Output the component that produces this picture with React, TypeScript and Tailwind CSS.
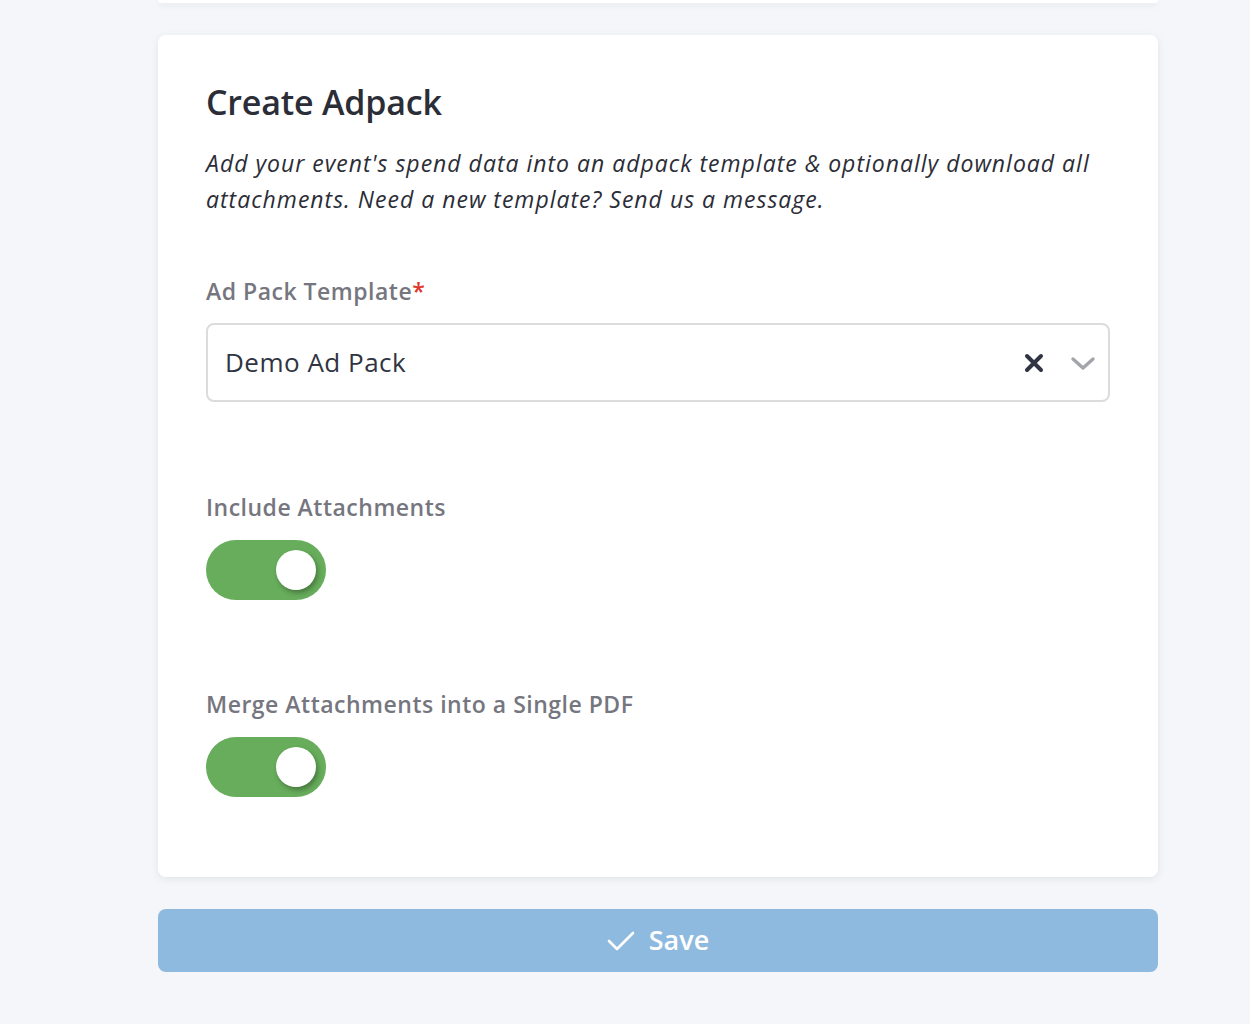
import React, { useState } from 'react';

const font = { fontFamily: '"Open Sans", Lato, sans-serif' };

const Toggle: React.FC<{ on: boolean; onChange: () => void }> = ({ on, onChange }) => (
  <button
    type="button"
    onClick={onChange}
    className={`flex h-[60px] w-[120px] items-center rounded-full px-[10px] ${on ? 'justify-end bg-[#67ad5b]' : 'justify-start bg-[#d5d7dd]'}`}
  >
    <span className="block h-[40px] w-[40px] rounded-full bg-white shadow-[2px_3px_5px_rgba(0,0,0,0.3)]" />
  </button>
);

export default function App() {
  const [include, setInclude] = useState(true);
  const [merge, setMerge] = useState(true);

  return (
    <div className="min-h-screen bg-[#f4f6fa]" style={font}>
      <div className="ml-[158px] w-[1000px] pb-[52px]">
        {/* previous card, scrolled off */}
        <div className="h-[3px] rounded-b-lg bg-white shadow-[0_2px_6px_rgba(0,0,0,0.08)]" />

        <div className="mt-[32px] rounded-lg bg-white px-[48px] pb-[80px] pt-[47px] shadow-[0_2px_8px_rgba(0,0,0,0.08)]">
          <h2 className="text-[34px] font-semibold leading-[40px] tracking-[-0.2px] text-[#2b2d37]">Create Adpack</h2>
          <p className="mt-[23px] text-[23px] italic leading-[36px] tracking-[1px] text-[#2b2d37]">
            Add your event's spend data into an adpack template &amp; optionally download all
            <br />
            attachments. Need a new template? Send us a message.
          </p>

          <label className="mt-[60px] block text-[23px] font-semibold leading-[28px] tracking-[0.5px] text-[#76767f]">
            Ad Pack Template<span className="text-[#e0352b]">*</span>
          </label>
          <div className="mt-[18px] flex h-[79px] items-center rounded-lg border-2 border-[#dcdcdf] pl-[17px] pr-[12px]">
            <span className="flex-1 text-[26px] tracking-[0.5px] text-[#2f3542]">Demo Ad Pack</span>
            <svg width="20" height="20" viewBox="0 0 20 20" className="mr-[26px]">
              <path d="M3 3 L17 17 M17 3 L3 17" stroke="#2f3542" strokeWidth="4" strokeLinecap="round" />
            </svg>
            <svg width="26" height="16" viewBox="0 0 26 16">
              <path d="M3 4 L13 13 L23 4" stroke="#a3a5ab" strokeWidth="3.4" fill="none" strokeLinecap="round" strokeLinejoin="round" />
            </svg>
          </div>

          <div className="mt-[91px] text-[23px] font-semibold leading-[28px] tracking-[0.5px] text-[#76767f]">
            Include Attachments
          </div>
          <div className="mt-[19px]">
            <Toggle on={include} onChange={() => setInclude(!include)} />
          </div>

          <div className="mt-[90px] text-[23px] font-semibold leading-[28px] tracking-[0.5px] text-[#76767f]">
            Merge Attachments into a Single PDF
          </div>
          <div className="mt-[19px]">
            <Toggle on={merge} onChange={() => setMerge(!merge)} />
          </div>
        </div>

        <button
          type="button"
          className="mt-[32px] flex h-[63px] w-full items-center justify-center gap-[14px] rounded-lg bg-[#8fbadf] text-[27px] font-semibold text-white"
        >
          <svg width="28" height="22" viewBox="0 0 28 22">
            <path d="M2 11 L10 19 L26 3" stroke="white" strokeWidth="2.6" fill="none" strokeLinecap="round" strokeLinejoin="round" />
          </svg>
          Save
        </button>
      </div>
    </div>
  );
}
